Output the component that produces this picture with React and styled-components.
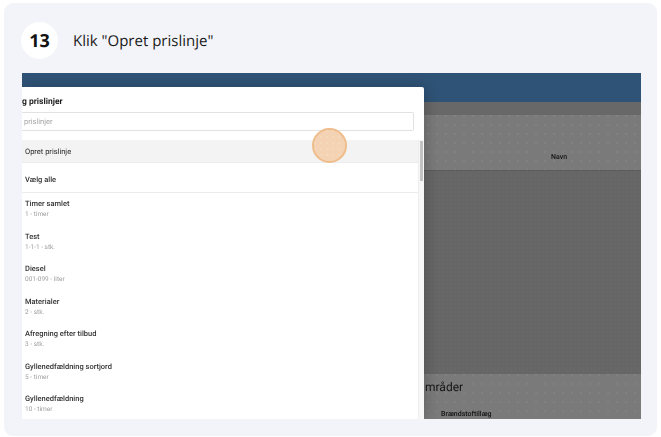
import React from 'react'
import styled, { createGlobalStyle } from 'styled-components'

const items = [
    { name: 'Timer samlet', sub: '1 - timer' },
    { name: 'Test', sub: '1-1-1 - stk.' },
    { name: 'Diesel', sub: '001-099 - liter' },
    { name: 'Materialer', sub: '2 - stk.' },
    { name: 'Afregning efter tilbud', sub: '3 - stk.' },
    { name: 'Gyllenedfældning sortjord', sub: '5 - timer' },
    { name: 'Gyllenedfældning', sub: '10 - timer' },
]

function App() {
    return (
        <>
            <GlobalStyle />
            <Card>
                <Header>
                    <StepNumber>13</StepNumber>
                    <StepTitle>Klik "Opret prislinje"</StepTitle>
                </Header>
                <Shot>
                    <TopBar />
                    <SubBar />
                    <TableHead><span>Navn</span></TableHead>
                    <TableBody />
                    <Section>
                        <SectionTitle>mråder</SectionTitle>
                        <SectionLabel>Brændstoftillæg</SectionLabel>
                    </Section>
                    <Panel>
                        <PanelTitle>g prislinjer</PanelTitle>
                        <SearchBox>prislinjer</SearchBox>
                        <CreateRow>Opret prislinje</CreateRow>
                        <SelectAll>Vælg alle</SelectAll>
                        <List>
                            {items.map((item) => (
                                <Item key={item.name}>
                                    <ItemName>{item.name}</ItemName>
                                    <ItemSub>{item.sub}</ItemSub>
                                </Item>
                            ))}
                        </List>
                        <ScrollTrack><ScrollThumb /></ScrollTrack>
                    </Panel>
                    <Hotspot />
                </Shot>
            </Card>
        </>
    )
}

export default App

const GlobalStyle = createGlobalStyle`
    html, body {
        margin: 0;
        padding: 0;
        background: #ffffff;
    }
    body {
        width: 661px;
        height: 437px;
        overflow: hidden;
        font-family: "Roboto", "Liberation Sans", sans-serif;
        text-rendering: geometricPrecision;
    }
`

const dots = (color) => `radial-gradient(circle at 1px 1px, ${color} 0.5px, transparent 1px)`

const Card = styled.div`
    box-sizing: border-box;
    width: 653px;
    height: 433px;
    margin: 3px 0 0 4px;
    padding: 19px 16px 17px 17px;
    background: #f3f4f9;
    border-radius: 9px;
`
const Header = styled.div`
    display: flex;
    align-items: center;
    height: 37px;
    margin-bottom: 14px;
`
const StepNumber = styled.div`
    width: 37px;
    height: 37px;
    display: flex;
    align-items: center;
    justify-content: center;
    border-radius: 50%;
    background: #ffffff;
    color: #121212;
    font-family: "Open Sans", sans-serif;
    font-size: 18px;
    font-weight: 700;
`
const StepTitle = styled.div`
    margin-left: 15px;
    color: #1a1a1a;
    font-family: "Open Sans", sans-serif;
    font-size: 15px;
`
const Shot = styled.div`
    position: relative;
    width: 619px;
    height: 346px;
    margin-left: 1px;
    overflow: hidden;
    display: flex;
    flex-direction: column;
    background: #666666;
    filter: blur(0.35px);
`
const TopBar = styled.div`
    height: 29px;
    flex: none;
    background: #2f5376;
`
const SubBar = styled.div`
    height: 13px;
    flex: none;
    background: #686868;
`
const TableHead = styled.div`
    height: 56px;
    flex: none;
    box-sizing: border-box;
    display: flex;
    align-items: flex-end;
    padding: 0 0 9px 529px;
    background-color: #7a7a7a;
    background-image: ${dots('#868686')};
    background-size: 9px 9px;
    border-bottom: 1px solid #5a5a5a;
    color: #151515;
    font-size: 7px;
    font-weight: 500;
`
const TableBody = styled.div`
    height: 203px;
    flex: none;
    background-color: #666666;
    background-image: ${dots('#6a6a6a')};
    background-size: 4px 4px;
`
const Section = styled.div`
    flex: 1;
    padding: 6px 0 0 403px;
    background-color: #7a7a7a;
    background-image: ${dots('#848484')};
    background-size: 9px 9px;
`
const SectionTitle = styled.div`
    color: #161616;
    font-size: 12px;
    line-height: 15px;
`
const SectionLabel = styled.div`
    margin: 15px 0 0 16px;
    color: #111111;
    font-size: 7px;
    font-weight: 500;
`
const Panel = styled.div`
    position: absolute;
    left: 0;
    top: 14px;
    bottom: 0;
    width: 402px;
    box-sizing: border-box;
    background: #ffffff;
    border-radius: 0 2px 0 0;
    box-shadow: 2px 0 14px rgba(0, 0, 0, 0.2);
    overflow: hidden;
`
const PanelTitle = styled.div`
    height: 25px;
    padding: 9px 0 0 0;
    box-sizing: border-box;
    color: #1c1c1c;
    font-size: 8.5px;
    font-weight: 700;
    line-height: 12px;
`
const SearchBox = styled.div`
    box-sizing: border-box;
    width: 392px;
    height: 19px;
    display: flex;
    align-items: center;
    padding-left: 2px;
    border: 1px solid #e2e2e2;
    border-left: none;
    border-radius: 0 2px 2px 0;
    color: #a5a5a5;
    font-size: 7.5px;
`
const CreateRow = styled.div`
    box-sizing: border-box;
    width: 396px;
    height: 23px;
    margin-top: 9px;
    display: flex;
    align-items: center;
    padding-left: 3px;
    background: #f3f3f3;
    border-bottom: 1px solid #ececec;
    color: #262626;
    font-size: 7.5px;
`
const SelectAll = styled.div`
    box-sizing: border-box;
    width: 396px;
    height: 30px;
    display: flex;
    align-items: center;
    padding: 3px 0 0 3px;
    border-bottom: 1px solid #ececec;
    color: #333333;
    font-size: 7.5px;
    font-weight: 500;
`
const List = styled.div`
    padding-top: 5px;
`
const Item = styled.div`
    height: 32.5px;
    padding-left: 3px;
`
const ItemName = styled.div`
    color: #333333;
    font-size: 7.5px;
    font-weight: 500;
    line-height: 12px;
`
const ItemSub = styled.div`
    margin-top: 0;
    color: #9c9c9c;
    font-size: 6.5px;
    line-height: 9px;
`
const ScrollTrack = styled.div`
    position: absolute;
    right: 0;
    top: 53px;
    bottom: 0;
    width: 6px;
    background: #f7f7f7;
    border-left: 1px solid #eeeeee;
    box-sizing: border-box;
`
const ScrollThumb = styled.div`
    width: 3px;
    height: 40px;
    margin: 1px 0 0 1px;
    background: #c3c3c3;
`
const Hotspot = styled.div`
    position: absolute;
    left: 290px;
    top: 55px;
    width: 35px;
    height: 35px;
    box-sizing: border-box;
    border-radius: 50%;
    border: 2px solid #efbd8b;
    background-color: #f3d3b3;
    background-image: ${dots('#f6dcc0')};
    background-size: 6px 6px;
`
